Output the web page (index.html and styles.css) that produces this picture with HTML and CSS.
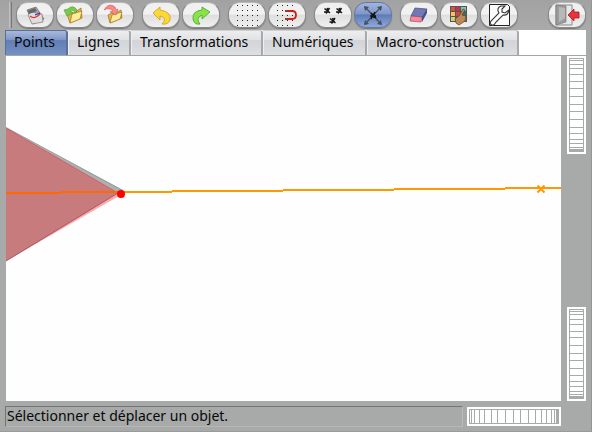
FILE: index.html
```html
<!DOCTYPE html>
<html lang="fr">
<head>
<meta charset="utf-8">
<title>Géométrie</title>
<link rel="stylesheet" href="styles.css">
</head>
<body>
<div class="app">
  <div class="toolbar">
    <span class="grip"></span>
    <div class="group">
      <button class="btn"><svg viewBox="0 0 38 26"><path d="M11 8 20 5 28 17 17 22Z" fill="#aaa" stroke="#666" stroke-width=".7"/><path d="M12 13 15 10 26 12 27 20 16 22Z" fill="#dedede" stroke="#777" stroke-width=".7"/><path d="M12 8.500 19 6 21 9 13 12Z" fill="#666"/><path d="M14 14q4 4 10-2" fill="none" stroke="#e33" stroke-width="1.300"/><path d="M19 13l5-2" stroke="#33c" stroke-width="1.200"/></svg></button>
      <button class="btn"><svg viewBox="0 0 38 26"><path d="M11 12 15 10 18 11 25 6 26 16 14 21Z" fill="#e2b545" stroke="#967018" stroke-width=".7"/><path d="M16 12 26 9 24 17 14 21Z" fill="#ffeb99" stroke="#a17a23" stroke-width=".7"/><path d="M8 8 12 7Q17 2 21 8L20 11Q17 7 14 9L17 11 11 14Z" fill="#79ca48" stroke="#4b9b2b" stroke-width=".6"/></svg></button>
      <button class="btn"><svg viewBox="0 0 38 26"><path d="M12 13 16 11 18 12 25 8 26 16 14 21Z" fill="#e2b545" stroke="#967018" stroke-width=".7"/><path d="M16 13 26 10 24 17 14 21Z" fill="#ffeb99" stroke="#a17a23" stroke-width=".7"/><path d="M8 8Q13 0 19 5L20 8 22 7 20 13 14 10 17 9Q13 5 8 8Z" fill="#f58c85" stroke="#dc5550" stroke-width=".6"/></svg></button>
    </div>
    <div class="group">
      <button class="btn"><svg viewBox="0 0 38 26"><path d="M11 11 18 5 18 8Q30 10 28 18 26 23 20 22 26 16 18 14V18Z" fill="#f9d838" stroke="#d39a16" stroke-width=".8"/></svg></button>
      <button class="btn"><svg viewBox="0 0 38 26"><path d="M28 10 20 5V8Q10 9 11 17 12 23 18 22 13 16 20 13V17Z" fill="#87e347" stroke="#45a324" stroke-width=".8"/></svg></button>
    </div>
    <div class="group">
      <button class="btn"><svg viewBox="0 0 38 26" shape-rendering="crispEdges"><path d="M9 3.500h22M9 8.500h22M9 13.500h22M9 18.500h22M9 23.500h22" stroke="#222" stroke-dasharray="1 4"/></svg></button>
      <button class="btn"><svg viewBox="0 0 38 26"><path d="M9 3.500h18M9 8.500h18M9 13.500h18M9 18.500h18M9 23.500h18" stroke="#222" stroke-dasharray="1 4" shape-rendering="crispEdges"/><path d="M18 9h6q4 0 4 4t-4 4h-6" fill="none" stroke="#d81c12" stroke-width="1.800"/><path d="M17 9h3M17 17h3" stroke="#973a32" stroke-width="2"/></svg></button>
    </div>
    <div class="group">
      <button class="btn"><svg viewBox="0 0 38 26"><g fill="none" stroke="#161616" stroke-width="1.500"><path id="star" d="M10.500 6.500 16 11M15.500 6 12 11.500M10 10h5M13 6l2 4"/><use href="#star" x="12"/><use href="#star" x="5.500" y="10"/></g></svg></button>
      <button class="btn selected"><svg viewBox="0 0 38 26"><path d="M11 5 27 22M27 5 11 22" stroke="#444f60" stroke-width="1.200"/><path d="M10 4l5 1-4 4ZM28 4l-5 1 4 4ZM10 23l5-1-4-4ZM28 23l-5-1 4-4Z" fill="#444f60"/><path d="M17 11l5 5M21 10l-4 7M16 14h6M20 11v5" stroke="#111" stroke-width="1.500"/></svg></button>
    </div>
    <div class="group">
      <button class="btn"><svg viewBox="0 0 38 26"><path d="M15 6 27 7 23 15 11 14Z" fill="#7277b5" stroke="#454976" stroke-width=".7"/><path d="M27 7 27 11 22 20 22 15Z" fill="#454e86"/><path d="M11 14 22 15 21 20 10 19Z" fill="#f48a9d" stroke="#a84b63" stroke-width=".7"/></svg></button>
      <button class="btn"><svg viewBox="0 0 38 26"><path d="M10 4h17v16H10Z" fill="#555"/><path d="M11 5h4v4h-4Z" fill="#e34d36"/><path d="M16 5h4v4h-4Z" fill="#bc3851"/><path d="M21 5h5v4h-5Z" fill="#76c5b9"/><path d="M11 10h4v4h-4Z" fill="#f5c35d"/><path d="M16 10h4v4h-4Z" fill="#c34d4e"/><path d="M21 10h5v4h-5Z" fill="#28735c"/><path d="M11 15h4v4h-4Z" fill="#c8d66d"/><path d="M21 15h5v4h-5Z" fill="#53a6a0"/><path d="M23 7l2 1-3 5 4 1-1 5-6 4-3-2-1-4 4-3Z" fill="#bd8959" stroke="#704728" stroke-width=".8"/></svg></button>
      <button class="btn"><svg viewBox="0 0 38 26"><path d="M9.500 2.500h18l2 2v19h-20Z" fill="#fafafa" stroke="#222"/><path d="M21 4q-5 2-2 7l-8 8q-2 3 1 4 2 1 4-3l7-7q5 1 6-5l-4 3-3-1 0-3 3-3Z" fill="#fff" stroke="#333" stroke-width="1.100"/></svg></button>
    </div>
    <button class="btn exit"><svg viewBox="0 0 38 26"><path d="M8 3h16v20H8Z" fill="#e7e7e7" stroke="#888"/><path d="M8 3 18 4V20L8 23Z" fill="#9b9b9b" stroke="#707070" stroke-width=".6"/><path d="M11 5 17 6V16L11 20Z" fill="#b8b8b8"/><path d="M20 13 26 7V10H31V16H26V19Z" fill="#e7333a" stroke="#ad171f" stroke-width=".8"/></svg></button>
  </div>
  <div class="tabs">
    <div class="tab points active">Points</div>
    <div class="tab lignes">Lignes</div>
    <div class="tab transformations">Transformations</div>
    <div class="tab numeriques">Numériques</div>
    <div class="tab macro">Macro-construction</div>
  </div>
  <div class="main">
    <svg class="canvas" viewBox="6 56 555 345">
      <path d="M6 128 124 191 6 261Z" fill="#acb0ae"/>
      <path d="M6 128 118 193 121 194 119 196 6 261Z" fill="#ffabab"/>
      <path d="M6 128 118 193 6 261Z" fill="#c77b7d"/>
      <path d="M6 127.500 123 190.500" stroke="#7d8583" stroke-width=".8"/>
      <path d="M6 128 118 193" stroke="#d64e55" stroke-width=".7"/>
      <path d="M6 261 118 193" stroke="#9d4950" stroke-width=".8"/>
      <g shape-rendering="crispEdges"><path d="M6 192h55v-1h57v2H61v1H6Z" fill="#ff6900"/><path d="M118 191h54v-1h111v-1h111v-1h111v-1h56v2h-56v1H394v1H283v1H172v1h-54Z" fill="#ff9900"/></g>
      <path d="M537.500 185.500l7 7M544.500 185.500l-7 7" stroke="#ff9900" stroke-width="2"/>
      <circle cx="121" cy="194" r="4" fill="#f00"/>
    </svg>
    <div class="side">
      <svg class="wheel" width="19" height="98" shape-rendering="crispEdges"><path d="M2.500 2.500h14v93h-14ZM2 4.500h15M2 8.500h15M2 12.500h15M2 18.500h15M2 25.500h15M2 32.500h15M2 40.500h15M2 48.500h15M2 55.500h15M2 63.500h15M2 71.500h15M2 77.500h15M2 83.500h15M2 87.500h15M2 91.500h15M2 93.500h15M2 94.500h15"/></svg>
      <svg class="wheel" width="19" height="94" shape-rendering="crispEdges"><path d="M2.500 2.500h14v89h-14ZM2 4.500h15M2 7.500h15M2 12.500h15M2 17.500h15M2 24.500h15M2 30.500h15M2 38.500h15M2 46.500h15M2 53.500h15M2 61.500h15M2 68.500h15M2 74.500h15M2 79.500h15M2 84.500h15M2 87.500h15M2 89.500h15M2 90.500h15"/></svg>
    </div>
  </div>
  <div class="bottom">
    <div class="status">Sélectionner et déplacer un objet.</div>
    <svg class="wheel" width="94" height="19" shape-rendering="crispEdges"><path d="M2.500 2.500h89v14h-89ZM4.500 2v15M7.500 2v15M12.500 2v15M17.500 2v15M24.500 2v15M30.500 2v15M38.500 2v15M46.500 2v15M53.500 2v15M61.500 2v15M68.500 2v15M74.500 2v15M79.500 2v15M84.500 2v15M87.500 2v15M89.500 2v15M90.500 2v15"/></svg>
  </div>
</div>
</body>
</html>
```

FILE: styles.css
```css
* { box-sizing: border-box; }
body { margin: 0; font: 14px/18px "Noto Sans", sans-serif; color: #080808; }
svg { display: block; }
.app {
  width: 592px;
  height: 432px;
  overflow: hidden;
  background: #a7aaa8;
  border-right: 1px solid #929694;
  border-bottom: 1px solid #989b99;
}
.toolbar {
  height: 30px;
  display: flex;
  align-items: flex-start;
  gap: 8px;
  padding: 2px 5px 0 9px;
  background: linear-gradient(#a2a2a2, #aaa);
}
.grip { width: 3px; height: 26px; margin-right: -4px; border-left: 1px solid #c1c1c1; border-right: 1px solid #777; }
.group { display: flex; gap: 2px; }
.btn {
  width: 38px;
  height: 26px;
  padding: 0;
  border: 1px solid #898989;
  border-top-color: #b9b9b9;
  border-radius: 12px;
  background: linear-gradient(#efefef, #f2f2f2 45%, #dfdfdf 52%, #f0f0f0);
  box-shadow: 0 1px 1px #777;
}
.btn svg { width: 38px; height: 26px; margin: -1px; }
.btn.selected { background: linear-gradient(#a2b5df, #8197c8 45%, #5c7bb8 50%, #91a8d8); border-color: #6379a4; }
.exit { margin-left: auto; }
.tabs { display: flex; height: 26px; margin: 0 5px; background: #fff; border-bottom: 1px solid #a4a6a5; }
.tab {
  height: 25px;
  padding: 2px 0 0 8px;
  border-right: 2px solid #a8a9ac;
  border-top: 1px solid #d1d1d3;
  border-top-right-radius: 3px;
  box-shadow: inset 1px 0 #eeeeef;
  background: linear-gradient(#eeeeef 0, #e1e2e4 35%, #d3d4d8 40%, #dedfe2 100%);
  white-space: nowrap;
}
.tab.active { background: linear-gradient(#a8b9dc 0, #8299c8 35%, #607eb5 40%, #7590c4 100%); border-color: #5b7098; box-shadow: inset 1px 0 #566f9e; }
.points { width: 63px; padding-left: 9px; }
.lignes { width: 63px; padding-left: 9px; }
.transformations { width: 132px; padding-left: 9px; }
.numeriques { width: 104px; padding-left: 9px; }
.macro { width: 152px; padding-left: 9px; }
.main { display: flex; height: 345px; padding-left: 6px; gap: 6px; }
.canvas { width: 555px; height: 345px; background: #fefefe; }
.side { display: flex; flex-direction: column; justify-content: space-between; }
.wheel { background: #fff; fill: none; stroke: #a7aaa8; }
.bottom { display: flex; gap: 4px; padding: 5px 0 0 5px; }
.bottom .wheel { margin-top: 1px; }
.status { width: 458px; height: 21px; padding: 0 0 0 1px; border: 1px solid #737675; border-right-color: #b9bbba; border-bottom-color: #b9b6b6; }
```
